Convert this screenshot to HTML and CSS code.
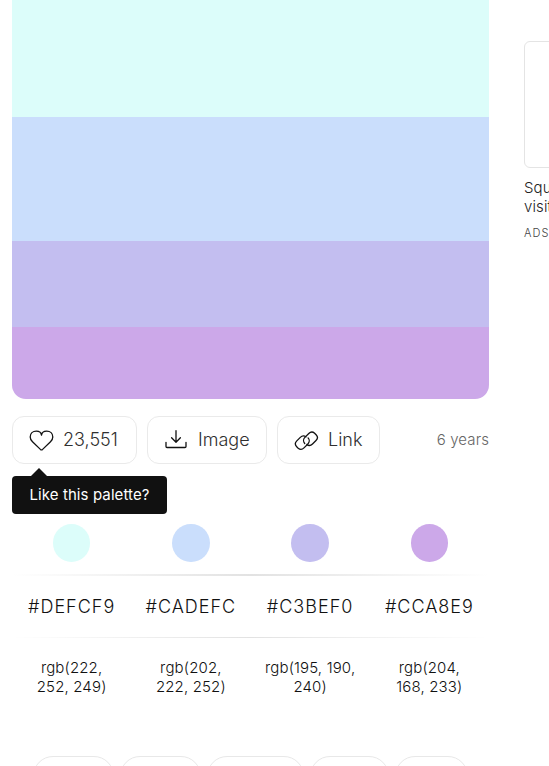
FILE: index.html
```html
<!DOCTYPE html>
<html lang="en">
<head>
<meta charset="utf-8">
<title>Palette</title>
<link rel="stylesheet" href="styles.css">
</head>
<body>
<div class="page">
  <main class="main">
    <div class="palette">
      <div class="band mint"></div>
      <div class="band sky"></div>
      <div class="band lavender"></div>
      <div class="band orchid"></div>
    </div>
    <div class="actions">
      <button class="button like">
        <svg class="icon" viewBox="0 0 26 24"><path d="M13.5 7.2C13.2 4.6 10.9 3.2 8.3 3.2C4.8 3.2 2.2 5.6 2.2 9C2.2 11 3.2 12.5 4.5 13.8L12.4 21.4Q13.5 22.3 14.6 21.4L22.5 13.8C23.8 12.5 24.8 11 24.8 9C24.8 5.6 22.2 3.2 18.7 3.2C16.1 3.2 13.8 4.6 13.5 7.2Z"/></svg>
        <span>23,551</span>
        <span class="tooltip">Like this palette?</span>
      </button>
      <button class="button image">
        <svg class="icon" viewBox="0 0 26 24"><path d="M13 2.7v11.3M8.6 9.8l4.4 4.4 4.4-4.4M3 14.3v4.2q0 1 1 1h18q1 0 1-1v-4.2"/></svg>
        <span>Image</span>
      </button>
      <button class="button link">
        <svg class="icon" viewBox="0 0 26 24"><path transform="translate(.4 .7)" d="M11.3 14.8C9.7 13 9.9 10.3 11.5 8.7L15.4 4.8C17.1 3.1 19.5 3 21.2 4.5L22.7 6C24.4 7.7 24.3 10.1 22.6 11.8L19.1 15.3C17.5 16.9 15.1 17.1 13.4 15.8M14.7 9.2C16.3 11 16.1 13.7 14.5 15.3L10.6 19.2C8.9 20.9 6.5 21 4.8 19.5L3.3 18C1.6 16.3 1.7 13.9 3.4 12.2L6.9 8.7C8.5 7.1 10.9 6.9 12.6 8.2"/></svg>
        <span>Link</span>
      </button>
      <span class="age">6 years</span>
    </div>
    <div class="colors">
      <div class="row circles">
        <div><i class="circle mint"></i></div><div><i class="circle sky"></i></div><div><i class="circle lavender"></i></div><div><i class="circle orchid"></i></div>
      </div>
      <div class="divider thick"></div>
      <div class="row hexes"><div>#DEFCF9</div><div>#CADEFC</div><div>#C3BEF0</div><div>#CCA8E9</div></div>
      <div class="divider"></div>
      <div class="row rgbs"><div>rgb(222,<br>252, 249)</div><div>rgb(202,<br>222, 252)</div><div>rgb(195, 190,<br>240)</div><div>rgb(204,<br>168, 233)</div></div>
    </div>
    <div class="tags"><div class="tag"></div><div class="tag"></div><div class="tag third"></div><div class="tag fourth"></div><div class="tag last"></div></div>
  </main>
  <aside class="ad">
    <div class="ad-image"></div>
    <div class="ad-text">Squarespace<br>visitors</div>
    <div class="ad-label">ADS VIA CARBON</div>
  </aside>
</div>
</body>
</html>
```
FILE: styles.css
```css
* { box-sizing: border-box; }
body { margin: 0; background: #fff; color: #111; font-family: Inter, "Liberation Sans", sans-serif; font-weight: 300; }
.page { display: flex; width: 549px; height: 766px; overflow: hidden; }
.main { flex: 0 0 477px; margin-left: 12px; }
.palette { height: 399px; display: grid; grid-template-rows: 117px 124px 86px 72px; border-radius: 0 0 14px 14px; overflow: hidden; }
.mint { background: #defcf9; }
.sky { background: #cadefc; }
.lavender { background: #c3bef0; }
.orchid { background: #cca8e9; }
.palette .mint, .circle.mint { background: #dcfdfa; }
.actions { display: flex; align-items: center; gap: 10px; height: 48px; margin-top: 17px; }
.button { position: relative; display: flex; align-items: center; gap: 9px; height: 48px; padding: 0 0 1px 15px; border: 1px solid #eaeaea; border-radius: 12px; background: #fff; color: #303030; font: inherit; font-size: 18px; letter-spacing: 0; white-space: nowrap; }
.like { width: 125px; }
.image { width: 120px; }
.link { width: 103px; }
.icon { width: 26px; height: 24px; fill: none; stroke: #111; stroke-width: 1.3; stroke-linecap: round; stroke-linejoin: round; }
.tooltip { position: absolute; z-index: 2; left: -1px; top: 59px; width: 155px; height: 38px; border-radius: 4px; background: #111; color: #fff; font-size: 15px; font-weight: 400; line-height: 37px; letter-spacing: 0.1px; text-align: center; }
.tooltip::before { content: ""; position: absolute; left: 19px; top: -8px; border: 8px solid transparent; border-top: 0; border-bottom-color: #111; }
.age { margin: 0 0 1px auto; color: #666; font-size: 15px; letter-spacing: 0.1px; }
.colors { margin-top: 60px; }
.row { display: grid; grid-template-columns: repeat(4, 1fr); text-align: center; }
.circles { height: 50px; }
.circle { display: block; width: 37.5px; height: 38px; margin: 0 auto; border-radius: 50%; }
.divider { height: 1px; background: linear-gradient(90deg, transparent, #e2e2e2 50%, transparent); }
.thick { height: 2px; }
.hexes { height: 61px; line-height: 61px; font-size: 18px; letter-spacing: 1px; }
.rgbs { height: 118px; padding-top: 20px; font-size: 15px; line-height: 19px; letter-spacing: 0.15px; }
.tags { display: flex; gap: 6px; margin-left: 21px; }
.tag { flex: 0 0 81px; height: 40px; border: 1px solid #e8e8e8; border-radius: 20px; }
.tag.third { flex-basis: 97px; }
.tag.fourth { flex-basis: 79px; }
.tag.last { flex-basis: 73px; }
.ad { flex: 0 0 180px; margin: 41px 0 0 35px; }
.ad-image { height: 127px; border: 1px solid #e4e4e4; border-radius: 6px; }
.ad-text { margin-top: 10px; font-size: 15px; line-height: 19px; letter-spacing: 0.1px; color: #222; white-space: nowrap; }
.ad-label { margin-top: 10px; font-size: 11px; line-height: 15px; letter-spacing: 1.1px; color: #444; white-space: nowrap; }
```
